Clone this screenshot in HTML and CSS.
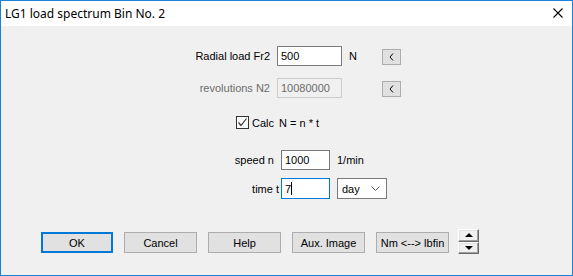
FILE: index.html
```html
<!DOCTYPE html>
<html lang="en">
<head>
    <meta charset="UTF-8">
    <title>LG1 load spectrum Bin No. 2</title>
    <link rel="stylesheet" href="styles.css">
</head>
<body>
    <div class="window">
        <div class="titlebar">
            <span class="title">LG1 load spectrum Bin No. 2</span>
            <svg class="close" width="10" height="10" viewBox="0 0 10 10">
                <path d="M0.5 0.5 L9.5 9.5 M9.5 0.5 L0.5 9.5" stroke="#000" stroke-width="1.1" fill="none"/>
            </svg>
        </div>

        <div class="content">
            <div class="row row-load">
                <label class="lbl">Radial load Fr2</label>
                <input class="field" type="text" value="500">
                <span class="unit">N</span>
                <button class="small-btn">
                    <svg width="5" height="8" viewBox="0 0 5 8"><path d="M4 0.5 L1 4 L4 7.5" stroke="#000" stroke-width="1" fill="none"/></svg>
                </button>
            </div>
            <div class="row row-rev">
                <label class="lbl disabled">revolutions N2</label>
                <input class="field" type="text" value="10080000" disabled>
                <span class="unit"></span>
                <button class="small-btn">
                    <svg width="5" height="8" viewBox="0 0 5 8"><path d="M4 0.5 L1 4 L4 7.5" stroke="#000" stroke-width="1" fill="none"/></svg>
                </button>
            </div>

            <div class="check-row">
                <span class="checkbox">
                    <svg width="11" height="11" viewBox="0 0 11 11">
                        <path d="M1.5 5.5 L4 8.5 L9.5 1.5" stroke="#333" stroke-width="1.2" fill="none"/>
                    </svg>
                </span>
                <span class="check-label">Calc</span>
                <span class="formula">N = n * t</span>
            </div>

            <div class="row row-speed">
                <label class="lbl lbl-calc">speed n</label>
                <input class="field field-short" type="text" value="1000">
                <span class="unit-calc">1/min</span>
            </div>
            <div class="row row-time">
                <label class="lbl lbl-calc lbl-time">time t</label>
                <div class="field field-short focus">7<span class="caret"></span></div>
                <div class="combo">
                    <span>day</span>
                    <svg width="9" height="5" viewBox="0 0 9 5">
                        <path d="M0.5 0.5 L4.5 4.5 L8.5 0.5" stroke="#555" stroke-width="1" fill="none"/>
                    </svg>
                </div>
            </div>

            <div class="buttons">
                <button class="btn default">OK</button>
                <button class="btn">Cancel</button>
                <button class="btn">Help</button>
                <button class="btn">Aux. Image</button>
                <button class="btn">Nm &lt;--&gt; lbfin</button>
                <div class="spinner">
                    <div class="spin-half"><span class="tri-up"></span></div>
                    <div class="spin-half"><span class="tri-down"></span></div>
                </div>
            </div>
        </div>
    </div>
</body>
</html>
```

FILE: styles.css
```css
body {
    margin: 0;
    padding: 0;
    font-family: "Liberation Sans", Arial, sans-serif;
    font-size: 11px;
    color: #000;
}

.window {
    width: 573px;
    height: 276px;
    box-sizing: border-box;
    border: 1px solid #1a82d6;
    background-color: #f0f0f0;
}

.titlebar {
    height: 25px;
    background-color: #fff;
    display: flex;
    align-items: center;
    padding-left: 4px;
    padding-right: 9px;
}

.title {
    flex: 1;
    font-family: "Noto Sans", "Open Sans", sans-serif;
    font-size: 12px;
    margin-top: -1px;
}

.close {
    margin-top: -1px;
}

.content {
    padding-top: 20px;
}

.row {
    display: flex;
    align-items: center;
    height: 20px;
}

.row-rev {
    margin-top: 12px;
}

.lbl {
    width: 269px;
    text-align: right;
    margin-right: 7px;
}

.lbl.disabled {
    color: #6d6d6d;
}

.field {
    width: 65px;
    height: 20px;
    box-sizing: border-box;
    border: 1px solid #7a7a7a;
    background-color: #fff;
    padding: 0 3px;
    margin: 0;
    font-family: "Liberation Sans", Arial, sans-serif;
    font-size: 11px;
    color: #000;
    outline: none;
}

.field:disabled {
    border-color: #cccccc;
    background-color: #f0f0f0;
    color: #6d6d6d;
}

.unit {
    width: 33px;
    margin-left: 7px;
}

.small-btn {
    width: 19px;
    height: 16px;
    margin: 2px 0 0 0;
    padding: 0;
    border: 1px solid #adadad;
    background-color: #e1e1e1;
    display: flex;
    align-items: center;
    justify-content: center;
}

.check-row {
    display: flex;
    align-items: center;
    height: 13px;
    margin-top: 18px;
    padding-left: 235px;
}

.checkbox {
    width: 13px;
    height: 13px;
    box-sizing: border-box;
    border: 1px solid #333;
    background-color: #fff;
    display: flex;
    align-items: center;
    justify-content: center;
}

.check-label {
    margin-left: 3px;
}

.formula {
    margin-left: 5px;
}

.row-speed {
    margin-top: 21px;
}

.row-time {
    margin-top: 8px;
    height: 21px;
}

.lbl-calc {
    width: 273px;
}

.lbl-time {
    width: 278px;
    margin-right: 2px;
}

.field-short {
    width: 49px;
}

div.field {
    display: flex;
    align-items: center;
}

.field.focus {
    height: 21px;
    border-color: #0078d7;
}

.caret {
    display: inline-block;
    width: 1px;
    height: 13px;
    background-color: #000;
}

.unit-calc {
    margin-left: 7px;
}

.combo {
    width: 50px;
    height: 21px;
    box-sizing: border-box;
    margin-left: 7px;
    border: 1px solid #7a7a7a;
    background-color: #fff;
    display: flex;
    align-items: center;
    justify-content: space-between;
    padding: 0 6px 0 4px;
}

.buttons {
    display: flex;
    align-items: flex-start;
    gap: 11px;
    margin-top: 33px;
    padding-left: 40px;
}

.btn {
    width: 73px;
    height: 21px;
    margin: 0;
    padding: 0;
    border: 1px solid #adadad;
    background-color: #e1e1e1;
    font-family: "Liberation Sans", Arial, sans-serif;
    font-size: 11px;
    color: #000;
}

.btn.default {
    width: 72px;
    border: 2px solid #0078d7;
}

.spinner {
    width: 21px;
    height: 25px;
    margin-top: -3px;
    margin-left: -2px;
    display: flex;
    flex-direction: column;
}

.spin-half {
    flex: 1;
    box-sizing: border-box;
    border-top: 1px solid #fff;
    border-left: 1px solid #fff;
    border-right: 1px solid #696969;
    border-bottom: 1px solid #696969;
    box-shadow: inset -1px -1px 0 #a0a0a0, inset 1px 1px 0 #e3e3e3;
    background-color: #f0f0f0;
    display: flex;
    align-items: center;
    justify-content: center;
}

.tri-up {
    width: 0;
    height: 0;
    border-left: 4px solid transparent;
    border-right: 4px solid transparent;
    border-bottom: 4px solid #000;
}

.tri-down {
    width: 0;
    height: 0;
    border-left: 4px solid transparent;
    border-right: 4px solid transparent;
    border-top: 4px solid #000;
}
```
